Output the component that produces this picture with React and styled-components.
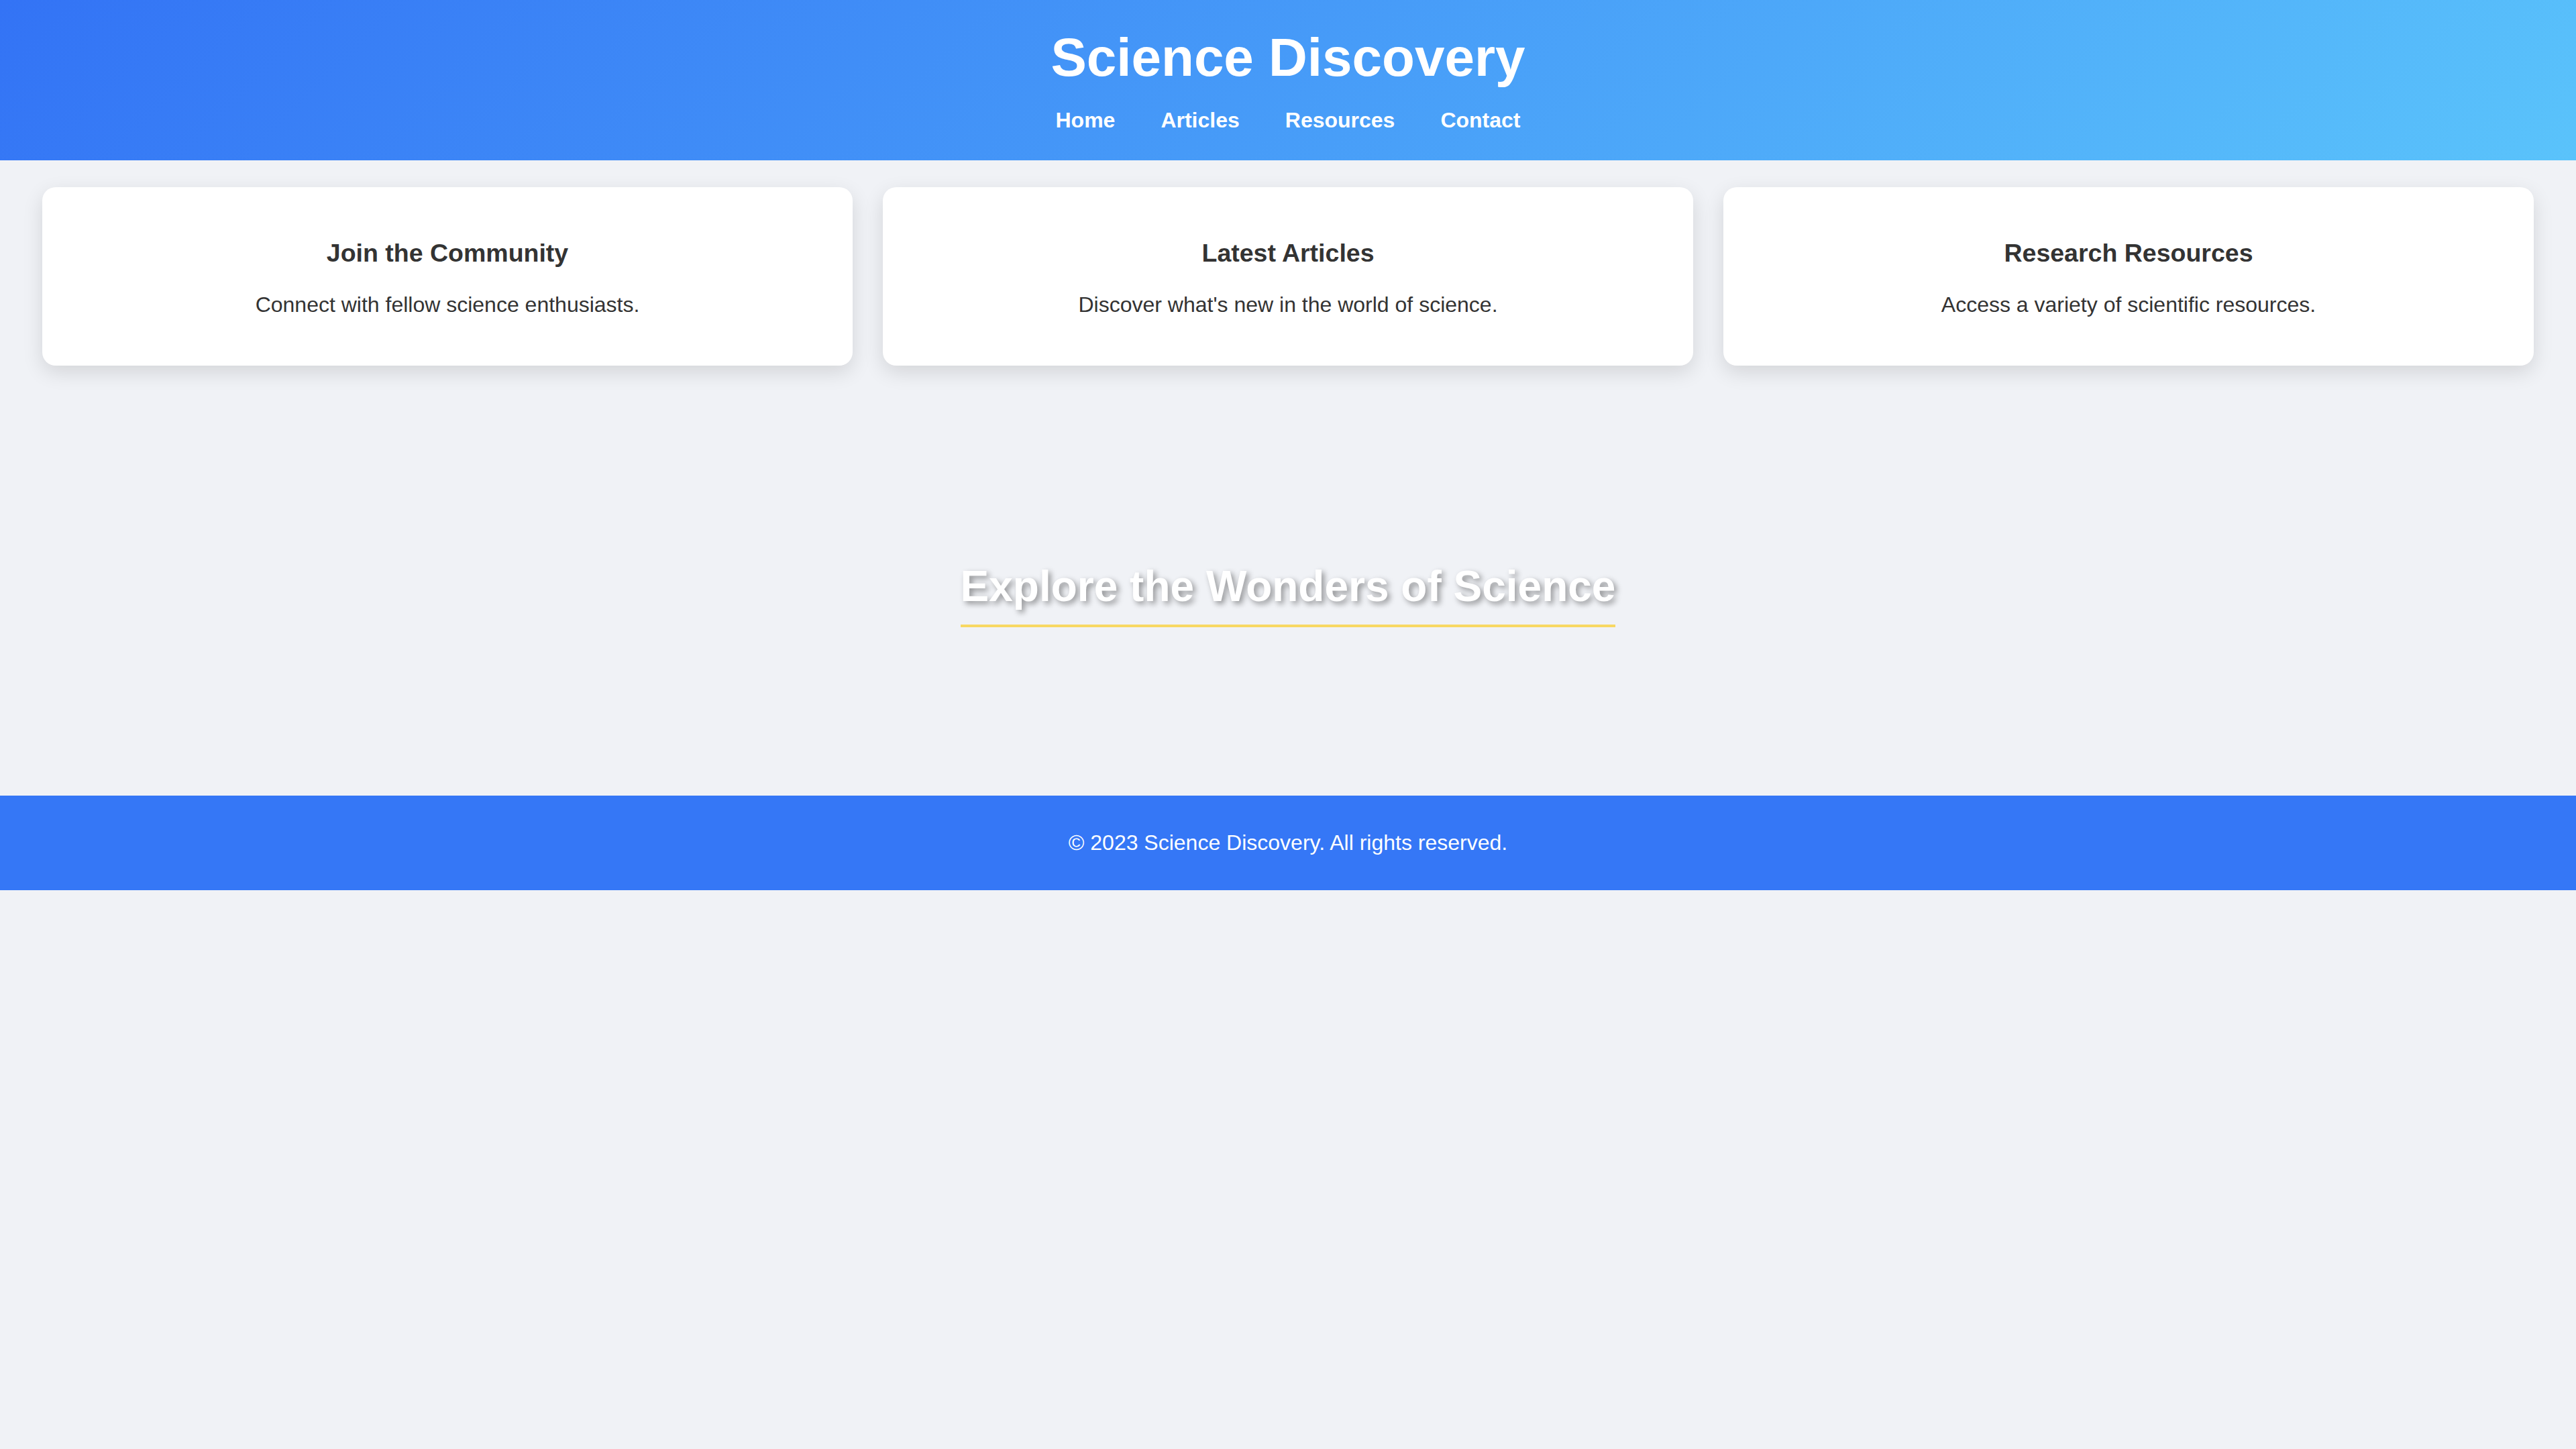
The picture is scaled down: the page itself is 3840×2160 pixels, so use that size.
import React from 'react';
import styled, { createGlobalStyle } from 'styled-components';

const GlobalStyle = createGlobalStyle`
  html, body {
    margin: 0;
    padding: 0;
    background: #f0f2f6;
    font-family: 'Liberation Sans', Arial, sans-serif;
    color: #333;
  }
`;

const cards = [
  { title: 'Join the Community', text: 'Connect with fellow science enthusiasts.' },
  { title: 'Latest Articles', text: "Discover what's new in the world of science." },
  { title: 'Research Resources', text: 'Access a variety of scientific resources.' },
];

const navLinks = ['Home', 'Articles', 'Resources', 'Contact'];

function App() {
  return (
    <>
      <GlobalStyle />
      <Header>
        <Title>Science Discovery</Title>
        <Nav>
          {navLinks.map((link) => (
            <NavLink key={link} href="#">
              {link}
            </NavLink>
          ))}
        </Nav>
      </Header>

      <CardGrid>
        {cards.map((card) => (
          <Card key={card.title}>
            <CardTitle>{card.title}</CardTitle>
            <CardText>{card.text}</CardText>
          </Card>
        ))}
      </CardGrid>

      <Hero>
        <HeroTitle>Explore the Wonders of Science</HeroTitle>
      </Hero>

      <Footer>© 2023 Science Discovery. All rights reserved.</Footer>
    </>
  );
}

export default App;

const Header = styled.header`
  background: linear-gradient(135deg, #3373f5 0%, #5ac3fb 100%);
  padding: 40px 0 41px;
  text-align: center;
  color: #fff;
`;

const Title = styled.h1`
  margin: 0 0 29px;
  font-size: 80px;
  font-weight: bold;
  color: #fff;
`;

const Nav = styled.nav`
  display: flex;
  justify-content: center;
  gap: 68px;
`;

const NavLink = styled.a`
  color: #fff;
  text-decoration: none;
  font-size: 32px;
  font-weight: bold;
`;

const CardGrid = styled.section`
  display: grid;
  grid-template-columns: repeat(3, 1fr);
  gap: 45px;
  padding: 40px 63px;
`;

const Card = styled.div`
  background: #fff;
  border-radius: 20px;
  padding: 40px;
  text-align: center;
  box-shadow: 0 10px 30px rgba(0, 0, 0, 0.12);
`;

const CardTitle = styled.h3`
  margin: 37px 0 37px;
  font-size: 37.5px;
  font-weight: bold;
  color: #333;
`;

const CardText = styled.p`
  margin: 0 0 32px;
  font-size: 32px;
  color: #333;
`;

const Hero = styled.section`
  padding: 252px 0 251px;
  text-align: center;
`;

const HeroTitle = styled.h2`
  display: inline-block;
  margin: 0;
  padding-bottom: 20px;
  font-size: 64px;
  font-weight: bold;
  color: #fff;
  text-shadow: 4px 4px 8px rgba(0, 0, 0, 0.4);
  border-bottom: 4px solid #f8d862;
`;

const Footer = styled.footer`
  background: #3577f6;
  color: #fff;
  text-align: center;
  padding: 52px 0;
  font-size: 32px;
`;
